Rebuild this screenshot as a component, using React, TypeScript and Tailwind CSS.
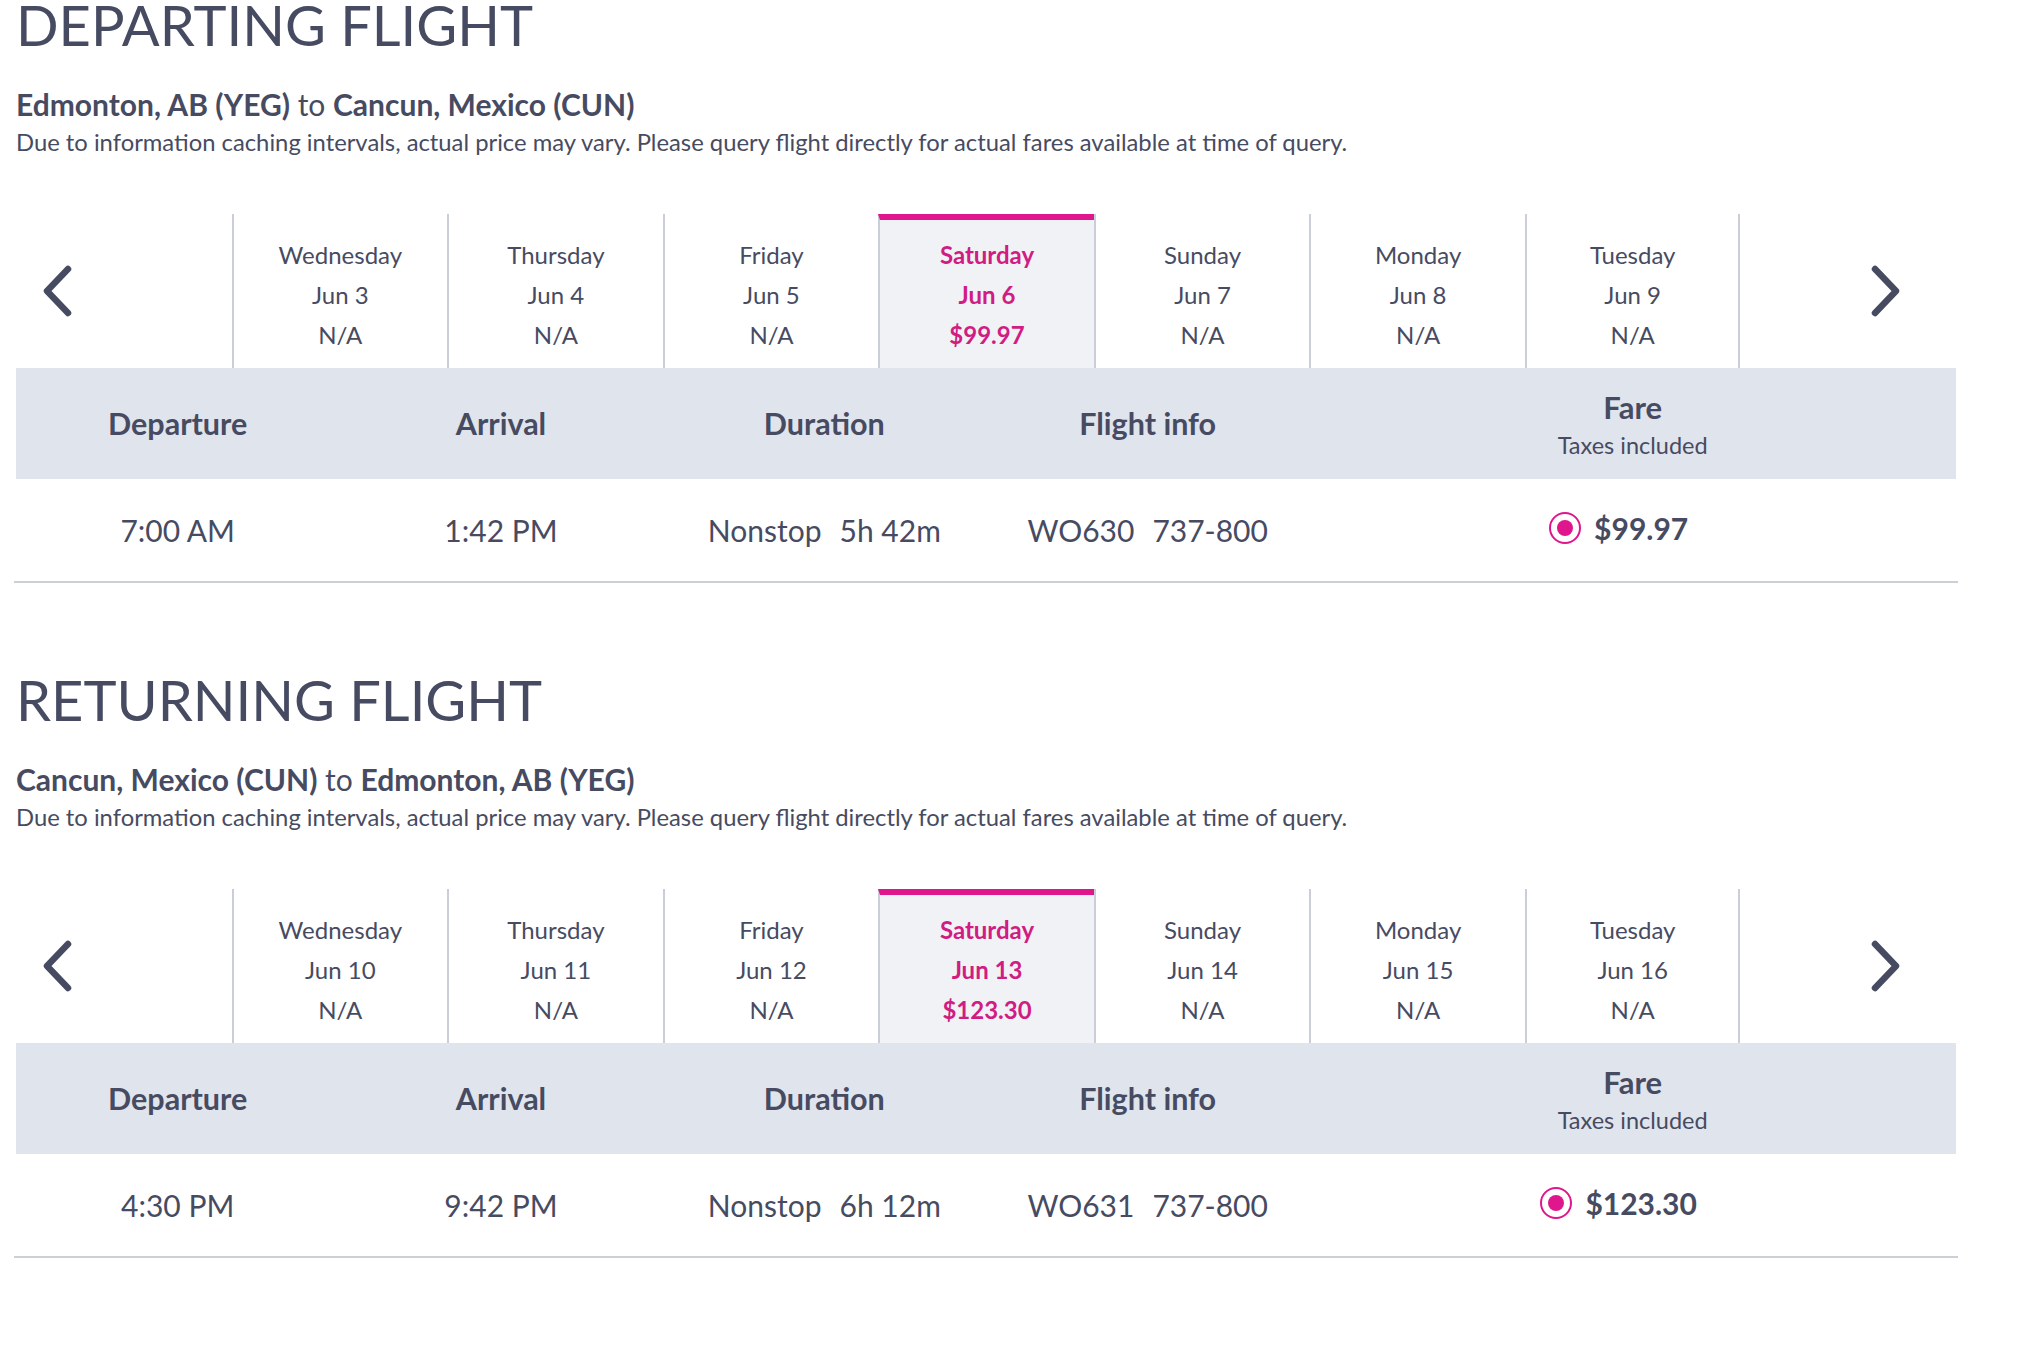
type Day = [string, string]

interface FlightSection {
  title: string
  from: string
  to: string
  days: Day[]
  selected: number
  selectedPrice: string
  dep: string
  arr: string
  stops: string
  duration: string
  flightNo: string
  aircraft: string
  fare: string
}

const sections: FlightSection[] = [
  {
    title: 'DEPARTING FLIGHT',
    from: 'Edmonton, AB (YEG)',
    to: 'Cancun, Mexico (CUN)',
    days: [
      ['Wednesday', 'Jun 3'],
      ['Thursday', 'Jun 4'],
      ['Friday', 'Jun 5'],
      ['Saturday', 'Jun 6'],
      ['Sunday', 'Jun 7'],
      ['Monday', 'Jun 8'],
      ['Tuesday', 'Jun 9'],
    ],
    selected: 3,
    selectedPrice: '$99.97',
    dep: '7:00 AM',
    arr: '1:42 PM',
    stops: 'Nonstop',
    duration: '5h 42m',
    flightNo: 'WO630',
    aircraft: '737-800',
    fare: '$99.97',
  },
  {
    title: 'RETURNING FLIGHT',
    from: 'Cancun, Mexico (CUN)',
    to: 'Edmonton, AB (YEG)',
    days: [
      ['Wednesday', 'Jun 10'],
      ['Thursday', 'Jun 11'],
      ['Friday', 'Jun 12'],
      ['Saturday', 'Jun 13'],
      ['Sunday', 'Jun 14'],
      ['Monday', 'Jun 15'],
      ['Tuesday', 'Jun 16'],
    ],
    selected: 3,
    selectedPrice: '$123.30',
    dep: '4:30 PM',
    arr: '9:42 PM',
    stops: 'Nonstop',
    duration: '6h 12m',
    flightNo: 'WO631',
    aircraft: '737-800',
    fare: '$123.30',
  },
]

function Chevron({ dir }: { dir: 'left' | 'right' }) {
  return (
    <svg width="30" height="52" viewBox="0 0 30 52" fill="none" aria-hidden="true">
      <path
        d={dir === 'left' ? 'M26 4 L5 26 L26 48' : 'M4 4 L25 26 L4 48'}
        stroke="#474b62"
        strokeWidth="6.5"
        strokeLinecap="round"
        strokeLinejoin="round"
      />
    </svg>
  )
}

function DateStrip({ s }: { s: FlightSection }) {
  return (
    <div className="grid grid-cols-9 h-[154px] mt-[51px]">
      <div className="flex items-center pl-[26px]">
        <Chevron dir="left" />
      </div>
      {s.days.map(([day, date], i) => {
        const active = i === s.selected
        return (
          <div
            key={day}
            className={
              'border-l-2 border-[#c9ced8] text-center text-[24px] leading-[40px] ' +
              (i === s.days.length - 1 ? 'border-r-2 ' : '') +
              (active
                ? 'bg-[#f1f2f6] border-t-[6px] border-t-[#e0168c] pt-[15px] font-bold text-[#d01c83]'
                : 'pt-[21px]')
            }
          >
            <div>{day}</div>
            <div>{date}</div>
            <div>{active ? s.selectedPrice : 'N/A'}</div>
          </div>
        )
      })}
      <div className="flex items-center justify-end pr-[55px]">
        <Chevron dir="right" />
      </div>
    </div>
  )
}

function Section({ s, first }: { s: FlightSection; first?: boolean }) {
  return (
    <section className={first ? '' : 'mt-[92px]'}>
      <h1 className="text-[56px] leading-[50px] font-normal">{s.title}</h1>
      <p className="mt-[36px] text-[30px] leading-[36px]">
        <span className="font-bold">{s.from}</span> to <span className="font-bold">{s.to}</span>
      </p>
      <p className="text-[23.8px] leading-[41px]">
        Due to information caching intervals, actual price may vary. Please query flight directly
        for actual fares available at time of query.
      </p>

      <DateStrip s={s} />

      <div className="grid grid-cols-6 h-[111px] bg-[#e0e4ec] items-center text-center">
        <div className="text-[30.5px] font-bold">Departure</div>
        <div className="text-[30.5px] font-bold">Arrival</div>
        <div className="text-[30.5px] font-bold">Duration</div>
        <div className="text-[30.5px] font-bold">Flight info</div>
        <div className="col-span-2 flex flex-col">
          <span className="text-[31px] font-bold leading-[43px]">Fare</span>
          <span className="text-[23.5px] leading-[32px]">Taxes included</span>
        </div>
      </div>

      <div className="-mx-[2px] border-b-2 border-[#cbcfd8]">
        <div className="mx-[2px] grid grid-cols-6 h-[102px] items-center text-center text-[30px]">
          <div>{s.dep}</div>
          <div>{s.arr}</div>
          <div>
            {s.stops}
            <span className="ml-[18px]">{s.duration}</span>
          </div>
          <div>
            {s.flightNo}
            <span className="ml-[18px]">{s.aircraft}</span>
          </div>
          <div className="col-span-2 flex items-center justify-center gap-[13px] pb-[4px] pr-[28px]">
            <span className="w-[32px] h-[32px] rounded-full border-[2.5px] border-[#e0168c] flex items-center justify-center">
              <span className="w-[16px] h-[16px] rounded-full bg-[#e0168c]" />
            </span>
            <span className="font-bold">{s.fare}</span>
          </div>
        </div>
      </div>
    </section>
  )
}

export default function App() {
  return (
    <div className="min-h-screen bg-white px-4 font-['Lato',sans-serif] text-[#474b62]">
      <div className="w-[1940px]">
        {sections.map((s, i) => (
          <Section key={s.title} s={s} first={i === 0} />
        ))}
      </div>
    </div>
  )
}
